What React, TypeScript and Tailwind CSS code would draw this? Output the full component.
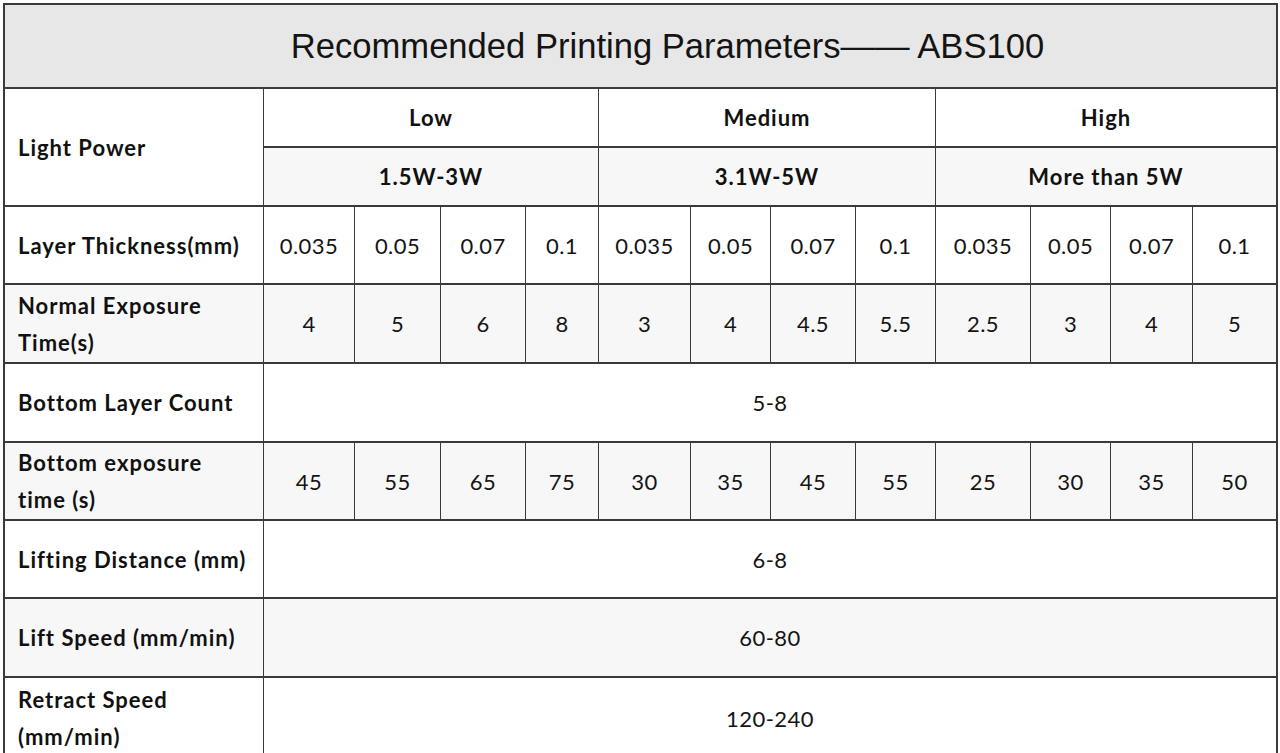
import React from "react";

const groups = [
  { name: "Low", range: "1.5W-3W" },
  { name: "Medium", range: "3.1W-5W" },
  { name: "High", range: "More than 5W" },
];

const thickness = ["0.035", "0.05", "0.07", "0.1"];

type Row = {
  label: string[];
  values?: string[];
  span?: string;
  gray?: boolean;
  h: string;
};

const rows: Row[] = [
  { label: ["Layer Thickness(mm)"], values: [...thickness, ...thickness, ...thickness], h: "h-[76px]" },
  {
    label: ["Normal Exposure", "Time(s)"],
    values: ["4", "5", "6", "8", "3", "4", "4.5", "5.5", "2.5", "3", "4", "5"],
    gray: true,
    h: "h-[77px]",
  },
  { label: ["Bottom Layer Count"], span: "5-8", h: "h-[77px]" },
  {
    label: ["Bottom exposure", "time (s)"],
    values: ["45", "55", "65", "75", "30", "35", "45", "55", "25", "30", "35", "50"],
    gray: true,
    h: "h-[76px]",
  },
  { label: ["Lifting Distance (mm)"], span: "6-8", h: "h-[76px]" },
  { label: ["Lift Speed (mm/min)"], span: "60-80", gray: true, h: "h-[77px]" },
  { label: ["Retract Speed", "(mm/min)"], span: "120-240", h: "h-[80px]" },
];

const font = { fontFamily: "Lato, 'Open Sans', sans-serif" };

function Label({ lines, gray }: { lines: string[]; gray?: boolean }) {
  return (
    <div
      className={`col-start-1 flex flex-col justify-center pl-[13px] text-[22px] font-bold leading-[37px] tracking-[0.045em] text-[#111] ${
        gray ? "bg-[#f7f7f7]" : "bg-white"
      }`}
    >
      {lines.map((l) => (
        <span key={l}>{l}</span>
      ))}
    </div>
  );
}

export default function App() {
  return (
    <div className="h-[753px] w-[1280px] overflow-hidden bg-white" style={font}>
      <div className="ml-[3px] mt-[3px] w-[1275px] bg-[#3a3a3a] p-[2px]">
        <div className="grid grid-cols-[258px_90px_85px_84px_72px_91px_79px_84px_79px_94px_79px_81px_83px] gap-x-px gap-y-[2px]">
          {/* title */}
          <div className="col-span-13 flex h-[82px] items-center justify-center bg-[#e7e7e7] pl-[54px] pt-[1px]">
            <h1
              className="text-[34.6px] font-normal text-[#141414]"
              style={{ fontFamily: "'Liberation Sans', Arial, sans-serif" }}
            >
              Recommended Printing Parameters—— ABS100
            </h1>
          </div>

          {/* light power */}
          <div className="row-span-2 flex items-center bg-white pl-[13px] text-[22px] font-bold tracking-[0.045em] text-[#111]">
            Light Power
          </div>
          {groups.map((g) => (
            <div
              key={g.name}
              className="col-span-4 flex h-[57px] items-center justify-center bg-white text-[22px] font-bold tracking-[0.045em] text-[#111]"
            >
              {g.name}
            </div>
          ))}
          {groups.map((g) => (
            <div
              key={g.range}
              className="col-span-4 flex h-[57px] items-center justify-center bg-[#f7f7f7] text-[22px] font-bold tracking-[0.045em] text-[#111]"
            >
              {g.range}
            </div>
          ))}

          {rows.map((r) => (
            <React.Fragment key={r.label.join(" ")}>
              <Label lines={r.label} gray={r.gray} />
              {r.values ? (
                r.values.map((v, i) => (
                  <div
                    key={i}
                    className={`flex ${r.h} items-center justify-center text-[22px] tracking-[0.02em] text-[#141414] ${
                      r.gray ? "bg-[#f7f7f7]" : "bg-white"
                    }`}
                  >
                    {v}
                  </div>
                ))
              ) : (
                <div
                  className={`col-span-12 flex ${r.h} items-center justify-center text-[22px] tracking-[0.02em] text-[#141414] ${
                    r.gray ? "bg-[#f7f7f7]" : "bg-white"
                  }`}
                >
                  {r.span}
                </div>
              )}
            </React.Fragment>
          ))}
        </div>
      </div>
    </div>
  );
}
